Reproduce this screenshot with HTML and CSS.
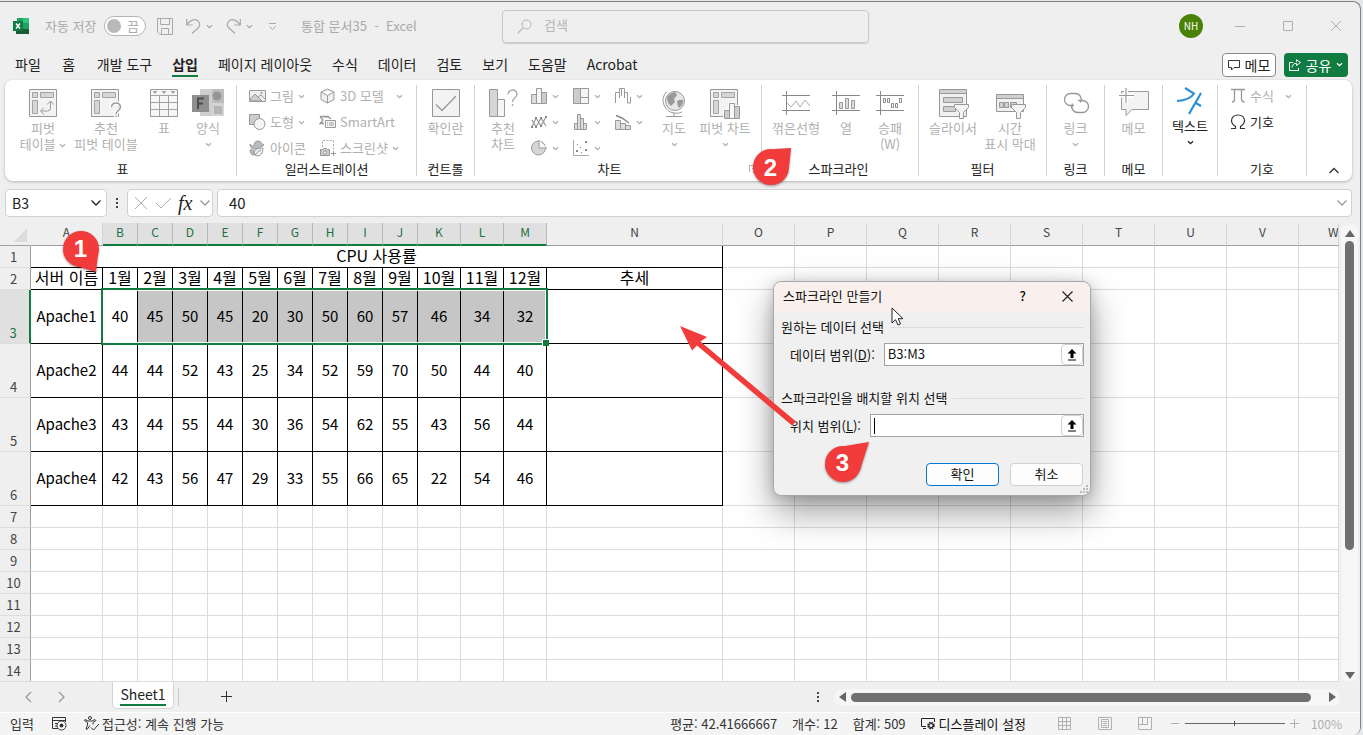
FILE: index.html
```html
<!DOCTYPE html>
<html lang="ko">
<head>
<meta charset="utf-8">
<title>통합 문서35 - Excel</title>
<link rel="stylesheet" href="styles.css">
</head>
<body>
<svg class="defs" aria-hidden="true">
  <symbol id="chev" viewBox="0 0 7 7"><path d="M1 2.2 3.5 4.7 6 2.2" fill="none" stroke="currentColor" stroke-width="1.3"/></symbol>
  <symbol id="chev-lg" viewBox="0 0 12 12"><path d="M1.5 3.5 6 8 10.500 3.500" fill="none" stroke="currentColor" stroke-width="1.3"/></symbol>
  <symbol id="pivot" viewBox="0 0 28 28"><path d="M.5.5h27v27H.5z" fill="#f3f3f3" stroke="#979797"/><path d="M3.500 3.500h5v5h-5zM11.500 3.500h13v5h-13zM3.500 11.500h5v13h-5z" fill="#d6d6d6" stroke="#a3a3a3"/></symbol>
  <symbol id="uparrow" viewBox="0 0 12 12"><path d="M6 0 10.500 4.500H7.500V9h-3V4.500h-3zM2 10.500h8v1H2z" fill="#000"/></symbol>
</svg>
<div class="window">
  <header class="titlebar">
    <div class="quick">
      <svg class="logo" width="17" height="16" viewBox="0 0 17 16"><path d="M4 0h12v16H4z" fill="#21a366"/><path d="M10 0h6v5h-6z" fill="#33c481"/><path d="M4 5h6v6H4z" fill="#107c41"/><path d="M10 5h6v6h-6z" fill="#21a366"/><path d="M3 11h13v5H3z" fill="#185c37"/><path d="M0 3h10v10H0z" fill="#107c41"/><path d="M3 5.500 7 10.500M7 5.500 3 10.500" stroke="#fff" stroke-width="1.500"/></svg>
      <span class="autosave">자동 저장</span>
      <button class="toggle" role="switch" aria-checked="false"><i></i>끔</button>
      <button class="qbtn save" aria-label="저장"><svg width="16" height="17" viewBox="0 0 16 17"><path d="M.5.5h15v16H3L.5 14zM3.500.5v6h9v-6M4.500 16.500v-6h7v6" fill="none" stroke="#a9a9a9"/></svg></button>
      <button class="qbtn" aria-label="실행 취소"><svg width="15" height="16" viewBox="0 0 15 16"><path d="M.7 1v6h6M1 6.700C4 2 8.500.5 11.500 2.500 14.500 5 14.500 8 11.500 10.500L6 15.500" fill="none" stroke="#a9a9a9" stroke-width="1.200"/></svg><svg class="chev"><use href="#chev"/></svg></button>
      <button class="qbtn" aria-label="다시 실행"><svg width="15" height="16" viewBox="0 0 15 16"><path d="M14.300 1v6h-6M14 6.700C11 2 6.500.5 3.500 2.500.5 5 .5 8 3.500 10.500L9 15.500" fill="none" stroke="#a9a9a9" stroke-width="1.200"/></svg><svg class="chev"><use href="#chev"/></svg></button>
      <button class="qbtn more" aria-label="빠른 실행 도구 모음 사용자 지정"><svg width="9" height="8" viewBox="0 0 9 8"><path d="M1 .5h7M1.500 3.500l3 3 3-3" fill="none" stroke="#a9a9a9"/></svg></button>
      <span class="doc">통합 문서35&nbsp; -&nbsp; Excel</span>
    </div>
    <label class="search"><svg width="15" height="15" viewBox="0 0 15 15"><circle cx="9.500" cy="5.500" r="4.500" fill="none" stroke="#b5b5b5"/><path d="M6.300 8.700.7 14.300" stroke="#b5b5b5" stroke-width="1.200"/></svg><input type="text" placeholder="검색" aria-label="검색"></label>
    <div class="winctl">
      <span class="avatar">NH</span>
      <button aria-label="최소화"><svg width="10" height="10"><path d="M0 5.500h10" stroke="#b0b0b0"/></svg></button>
      <button aria-label="최대화"><svg width="10" height="10"><path d="M.5.5h9v9h-9z" fill="none" stroke="#b0b0b0"/></svg></button>
      <button aria-label="닫기"><svg width="10" height="10"><path d="M0 0 10 10M10 0 0 10" stroke="#b0b0b0"/></svg></button>
    </div>
  </header>

  <nav class="tabs">
    <button>파일</button><button>홈</button><button>개발 도구</button><button class="on">삽입</button><button>페이지 레이아웃</button><button>수식</button><button>데이터</button><button>검토</button><button>보기</button><button>도움말</button><button>Acrobat</button>
    <div class="tabs-right">
      <button class="note"><svg width="12" height="12" viewBox="0 0 12 12"><path d="M.5 1.500h11v7H6L3.500 11V8.500h-3z" fill="none" stroke="#333"/></svg>메모</button>
      <button class="share"><svg width="12" height="12" viewBox="0 0 12 12"><path d="M4 3.500H.5v8h9V9M3 8.500c.5-3 2-4.200 4.500-4.200V6.500L11.500 3.500 7.500.7v2" fill="none" stroke="#fff"/></svg>공유<svg class="chev"><use href="#chev"/></svg></button>
    </div>
  </nav>

  <section class="ribbon">
    <div class="group g-table">
      <div class="items">
        <button class="big w56"><svg width="28" height="28"><use href="#pivot"/><path d="M12 22h6.500q3 0 3-3v-6M15 18.500 11.500 22l3.500 3.500M18 15.500l3.500-3.500 3.500 3.500" fill="none" stroke="#999"/></svg>피벗<br><span>테이블 <svg class="chev"><use href="#chev"/></svg></span></button>
        <button class="big w70"><svg width="30" height="28"><use href="#pivot" width="28" height="28"/><path d="M20 18q.5-4 5-4t4.500 4c0 4-4.500 4-4.500 7.500M25 27v1.500" fill="none" stroke="#fff" stroke-width="4"/><path d="M20.500 18q.5-4 4.500-4t4.500 4c0 3.500-4.500 4-4.500 7M25 26.500V28" fill="none" stroke="#999" stroke-width="1.500"/></svg>추천<br>피벗 테이블</button>
        <button class="big w46"><svg width="28" height="28"><path d="M.5.5h27v27H.5z" fill="#f6f6f6" stroke="#979797"/><path d="M1 6.500h26M1 13.500h26M1 20.500h26M9.500 6.500V27M18.500 6.500V27" stroke="#a3a3a3"/><path d="M2.500 2h5L5 5zM11.500 2h5L14 5zM20.500 2h5L23 5z" fill="#a3a3a3"/></svg>표</button>
        <button class="big w42"><svg width="32" height="28"><path d="M8 0h24v27H8z" fill="#cfcfcf"/><path d="M20 0h12v14H20z" fill="#bdbdbd"/><path d="M20 14h12v13H20z" fill="#d3d3d3"/><circle cx="25" cy="7" r="4.500" fill="#959595"/><path d="M22 17h8v8h-8z" fill="#b5b5b5"/><path d="M0 6h17v17H0z" fill="#8f8f8f"/><path d="M6 20V9.500h6M6 14.500h5" fill="none" stroke="#4c4c4c" stroke-width="2"/></svg>양식<svg class="chev below"><use href="#chev"/></svg></button>
      </div>
      <h2>표</h2>
    </div>
    <div class="group g-illus">
      <div class="items">
        <div class="stack c1">
          <button><svg width="17" height="16"><path d="M.5 2.500h16v11H.5z" fill="#eee" stroke="#999"/><path d="M1 11l5-5 7 7H1z" fill="#ccc" stroke="#999"/><path d="M9 9l3-2 4 4" fill="none" stroke="#999"/><circle cx="12.500" cy="5" r="1" fill="#999"/></svg>그림<svg class="chev"><use href="#chev"/></svg></button>
          <button><svg width="17" height="16"><path d="M.5.5h10v10H.5z" fill="#ccc" stroke="#999"/><circle cx="10.500" cy="10" r="5.500" fill="#f4f4f4" stroke="#999"/></svg>도형<svg class="chev"><use href="#chev"/></svg></button>
          <button><svg width="17" height="17"><path d="M5 6Q5 1 9 1q3 0 3.500 2.500L15 5q-2 1.500-3 1.500Q11 9 6 9 1 9 1 4q2 3 4 2zM1 10q3-1 4 1v4Q1 15 1 10z" fill="#bbb" stroke="#999"/><path d="M5 12q1-4 9-4 0 8-6 8-3 0-3-4zM6 15q3-4 6-5" fill="#eee" stroke="#999"/></svg>아이콘</button>
        </div>
        <div class="stack">
          <button><svg width="16" height="16"><path d="M7.500 1 14 4v7.500L7.500 15 1 11.500V4zM1 4l6.500 3.500L14 4M7.500 7.500V15" fill="#f1f1f1" stroke="#999"/></svg>3D 모델<svg class="chev far"><use href="#chev"/></svg></button>
          <button><svg width="16" height="16"><path d="M0 2.500h8L11 5M0 2.500 3 6 0 9.500h4" fill="#ccc" stroke="#999" stroke-width="1.300"/><path d="M5.500 6.500h10v7h-10z" fill="#f4f4f4" stroke="#999"/><path d="M7 9h1M9 9h5M7 11h1M9 11h5" stroke="#999"/></svg>SmartArt</button>
          <button><svg width="16" height="17"><path d="M2.500 7V.5h11V10" fill="none" stroke="#aaa" stroke-dasharray="2 1.500"/><path d="M.5 9.500h2l1-1h3l1 1h2v6h-9z" fill="#ccc" stroke="#999"/><circle cx="5" cy="12.500" r="1.700" fill="#eee" stroke="#999"/><path d="M11 13.500h5M13.500 11v5" stroke="#999"/></svg>스크린샷<svg class="chev"><use href="#chev"/></svg></button>
        </div>
      </div>
      <h2>일러스트레이션</h2>
    </div>
    <div class="group g-58">
      <div class="items center"><button class="big w56"><svg width="28" height="28"><path d="M.5.5h27v27H.5z" fill="#f3f3f3" stroke="#979797"/><path d="M4 15.500 10 21.500 24 7" fill="none" stroke="#999" stroke-width="1.300"/></svg>확인란</button></div>
      <h2>컨트롤</h2>
    </div>
    <div class="group g-chart">
      <div class="items">
        <button class="big w42"><svg width="28" height="28"><path d="M.5.500h8v27h-8z" fill="#d6d6d6" stroke="#999"/><path d="M8.500 10.500h7v17h-7z" fill="#f5f5f5" stroke="#999"/><path d="M19 5.500q.5-4.500 4.500-4.500T28 5c0 4-4.500 4-4.500 8M23.500 15v2" fill="none" stroke="#aaa" stroke-width="1.400"/></svg>추천<br>차트</button>
        <div class="icons">
          <button aria-label="세로 막대형"><svg width="16" height="16"><path d="M.5 6.500h5v9h-5z" fill="#ddd" stroke="#999"/><path d="M5.500.5h5v15h-5z" fill="#f5f5f5" stroke="#999"/><path d="M10.500 4.500h5v11h-5z" fill="#ccc" stroke="#999"/></svg><svg class="chev"><use href="#chev"/></svg></button>
          <button aria-label="계층 구조"><svg width="16" height="16"><path d="M.5.5h15v15H.5z" fill="#f5f5f5" stroke="#999"/><path d="M.5.500h7v15h-7z" fill="#ccc" stroke="#999"/><path d="M7.500 9.500h8" stroke="#999"/></svg><svg class="chev"><use href="#chev"/></svg></button>
          <button aria-label="폭포"><svg width="16" height="16"><path d="M.5 15V4.500h4V10M4.500 6V.5h5V10M6.500 1v7M9.500 4.500h3V15h3V9" fill="none" stroke="#999"/></svg><svg class="chev"><use href="#chev"/></svg></button>
          <button aria-label="꺾은선형"><svg width="16" height="16"><path d="M1 13 5 4l5 8 5-9M1 6l4 7 5-9 5 8" fill="none" stroke="#999" stroke-width="1.200"/><path d="M0 12h2v2H0zM4 3h2v2H4zM9 11h2v2H9zM14 2h2v2h-2zM4 12h2v2H4zM9 3h2v2H9z" fill="#888"/></svg><svg class="chev"><use href="#chev"/></svg></button>
          <button aria-label="통계"><svg width="16" height="16"><path d="M1.500 9.500h3v6h-3zM4.500.5h3v15h-3zM7.500 4.500h3v11h-3zM10.500 9.500h3v6h-3z" fill="#ddd" stroke="#999"/></svg><svg class="chev"><use href="#chev"/></svg></button>
          <button aria-label="콤보"><svg width="16" height="16"><path d="M.5 6.500h5v9h-5zM5.500 9.500h5v6h-5zM10.500 11.500h5v4h-5z" fill="#ddd" stroke="#999"/><path d="M1 1.500 7 4l7 5" fill="none" stroke="#888" stroke-width="1.500"/></svg><svg class="chev"><use href="#chev"/></svg></button>
          <button aria-label="원형"><svg width="16" height="16"><circle cx="7.500" cy="8" r="7" fill="#d6d6d6" stroke="#999"/><path d="M8 0v8h8" fill="#f8f8f8" stroke="#999"/></svg><svg class="chev"><use href="#chev"/></svg></button>
          <button aria-label="분산형"><svg width="16" height="16"><path d="M.5 0v15.500H16" fill="none" stroke="#aaa"/><path d="M3 10h2v2H3zM7 7h1v1H7zM12 1h2v2h-2zM4 4h1v1H4zM12 9h2v2h-2zM8 12h1v1H8z" fill="#888"/></svg><svg class="chev"><use href="#chev"/></svg></button>
        </div>
        <button class="big w34"><svg width="24" height="29"><circle cx="13" cy="12" r="9.500" fill="#e6e6e6" stroke="#999"/><path d="M5 8q3-4 8-5l2 3-3 4 1 3-4 4q-4-3-4-9zM15 12q3-2 6-1 1 4-4 8-2-3-2-7z" fill="#999"/><path d="M4.500 3Q-1 9 2 16t10 8q5 1 8-1M12 24v3M4 27.500h16" fill="none" stroke="#999"/></svg>지도<svg class="chev below"><use href="#chev"/></svg></button>
        <button class="big w68"><svg width="30" height="30"><use href="#pivot" width="28" height="28"/><path d="M13 20h5v-7h7v3h5v14H13z" fill="#fff"/><path d="M14.500 21.500h5v8h-5zM24.500 17.500h5v12h-5z" fill="#ccc" stroke="#999"/><path d="M19.500 14.500h5v15h-5z" fill="#f8f8f8" stroke="#999"/></svg>피벗 차트<svg class="chev below"><use href="#chev"/></svg></button>
      </div>
      <h2>차트</h2>
      <svg class="launcher" width="8" height="8"><path d="M.5 7V.5H7M3 3l4 4M7.500 4v3.500H4" fill="none" stroke="#aaa"/></svg>
    </div>
    <div class="group g-spark">
      <div class="items">
        <button class="big w58"><svg width="28" height="28"><path d="M0 6.500h28M0 21.500h28M4.500 2v24" stroke="#888"/><path d="M5 14l4 4 5-6 4 6 5-7 5 6" fill="none" stroke="#aaa"/></svg>꺾은선형</button>
        <button class="big w42"><svg width="28" height="28"><path d="M0 6.500h28M0 21.500h28M4.500 2v24" stroke="#888"/><path d="M7.500 13.500h3v6h-3zM13.500 9.500h3v10h-3zM19.500 11.500h3v8h-3z" fill="#ddd" stroke="#999"/></svg>열</button>
        <button class="big w46"><svg width="28" height="28"><path d="M0 6.500h28M0 21.500h28M4.500 2v24" stroke="#888"/><path d="M7.500 9.500h2v4h-2zM11.500 9.500h2v4h-2zM15.500 14.500h2v4h-2zM19.500 14.500h2v4h-2zM23.500 9.500h2v4h-2z" fill="none" stroke="#888"/></svg>승패<br>(W)</button>
      </div>
      <h2>스파크라인</h2>
    </div>
    <div class="group g-filter">
      <div class="items">
        <button class="big w60"><svg width="28" height="30"><path d="M.5.5h27v27H.5z" fill="#f1f1f1" stroke="#979797"/><path d="M1 1h26v3H1z" fill="#d0d0d0"/><path d="M.5 4.500h27" stroke="#999"/><path d="M4.500 8.500h19v5h-19zM4.500 17.500h12v5h-12z" fill="#d0d0d0" stroke="#999"/><path d="M15.500 15.500h14v3l-5 5v6h-4v-6l-5-5z" fill="#f4f4f4" stroke="#999"/></svg>슬라이서</button>
        <button class="big w54"><svg width="28" height="30"><path d="M.5 5.500h27v17H.5z" fill="#f1f1f1" stroke="#979797"/><path d="M1 6h26v3H1z" fill="#d0d0d0"/><path d="M.5 9.500h27" stroke="#999"/><path d="M3.500 13.500h4v5h-4zM8.500 13.500h4v5h-4zM14.500 13.500h6v5h-6z" fill="#d0d0d0" stroke="#999"/><path d="M15.500 15.500h14v3l-5 5v6h-4v-6l-5-5z" fill="#f4f4f4" stroke="#999"/></svg>시간<br>표시 막대</button>
      </div>
      <h2>필터</h2>
    </div>
    <div class="group g-58">
      <div class="items center"><button class="big w56"><svg width="28" height="28"><path d="M12 16.500H8.500a6 6 0 0 1 0-12h5a6 6 0 0 1 5 9M16 11.500h4.500a6 6 0 0 1 0 12h-5a6 6 0 0 1-5-9" fill="none" stroke="#999" stroke-width="1.300"/></svg>링크<svg class="chev below"><use href="#chev"/></svg></button></div>
      <h2>링크</h2>
    </div>
    <div class="group g-58">
      <div class="items center"><button class="big w56"><svg width="32" height="28"><path d="M3.500 2.500h27v18H14l-6 6v-6H3.500z" fill="#f3f3f3" stroke="#999"/><path d="M8 -1v15M1 6.500h15" stroke="#fff" stroke-width="4"/><path d="M8 -1v15M1 6.500h15" stroke="#999" stroke-width="1.200"/></svg>메모</button></div>
      <h2>메모</h2>
    </div>
    <div class="group g-text">
      <div class="items center"><button class="big dark w54"><svg width="28" height="28"><path d="M9 1l9 5.500Q14 13 1 14" fill="none" stroke="#2b8fd3" stroke-width="2.200"/><path d="M25 6 13 27M19 15.500l6 3.500" fill="none" stroke="#2b8fd3" stroke-width="2.200"/></svg>텍스트<svg class="chev below"><use href="#chev"/></svg></button></div>
    </div>
    <div class="group g-sym">
      <div class="items"><div class="stack">
        <button><svg width="16" height="16"><path d="M1 1.500h14M4.500 2v10q0 2-2.500 2M11.500 2v9q0 3 3 3" fill="none" stroke="#999" stroke-width="1.300"/></svg>수식<svg class="chev sym"><use href="#chev"/></svg></button>
        <button class="dark"><svg width="16" height="16"><path d="M1 14.500h4.500v-2Q1.500 10 1.500 6.500 2 1 8 1t6.500 5.500q0 3.500-4 6v2H15" fill="none" stroke="#333" stroke-width="1.200"/></svg>기호</button>
      </div></div>
      <h2>기호</h2>
    </div>
    <button class="collapse" aria-label="리본 메뉴 축소"><svg width="12" height="12"><path d="M1.500 8 6 3.500 10.500 8" fill="none" stroke="#333" stroke-width="1.300"/></svg></button>
  </section>

  <section class="formula">
    <div class="box name"><input type="text" value="B3" aria-label="이름 상자"><button aria-label="이름 목록"><svg width="12" height="12"><use href="#chev-lg"/></svg></button></div>
    <span class="dots"><i></i><i></i><i></i></span>
    <div class="box fx">
      <button aria-label="취소"><svg width="14" height="14"><path d="M1 1l12 12M13 1 1 13" stroke="#aaa"/></svg></button>
      <button aria-label="입력"><svg width="17" height="14"><path d="M1 7l5 5L16 2" fill="none" stroke="#aaa"/></svg></button>
      <button class="f" aria-label="함수 삽입">fx</button>
      <button class="grey" aria-label="함수 목록"><svg width="12" height="12"><use href="#chev-lg"/></svg></button>
    </div>
    <div class="box entry"><input type="text" value="40" aria-label="수식 입력줄"><button class="grey" aria-label="수식 입력줄 확장"><svg width="12" height="12"><use href="#chev-lg"/></svg></button></div>
  </section>

  <main class="sheet">
    <div class="cells">
      <table class="grid">
        <colgroup id="cols"></colgroup>
        <thead id="head"></thead>
        <tbody id="body"></tbody>
      </table>
      <div class="selection"></div>
    </div>
    <div class="vscroll"><i class="up"></i><i class="thumb"></i><i class="down"></i></div>
  </main>

  <footer class="sheets">
    <button class="nav" aria-label="이전 시트"><svg width="8" height="10"><path d="M7 0 2 5l5 5" fill="none" stroke="#999" stroke-width="1.300"/></svg></button>
    <button class="nav" aria-label="다음 시트"><svg width="8" height="10"><path d="M2 0l5 5-5 5" fill="none" stroke="#999" stroke-width="1.300"/></svg></button>
    <button class="sheet-tab"><span>Sheet1</span></button>
    <i class="sep"></i>
    <button class="add" aria-label="새 시트"><svg width="12" height="12"><path d="M0 5.500h11M5.500 0v11" stroke="#333"/></svg></button>
    <span class="dots"><i></i><i></i><i></i></span>
    <div class="hscroll"><i class="left"></i><i class="thumb"></i><i class="right"></i></div>
  </footer>

  <footer class="status">
    <span class="mode">입력</span>
    <svg width="15" height="14" class="rec"><path d="M13.500 5V.5H.5v11H6M.5 3.500h13M3 6.500h3M3 9h2" fill="none" stroke="#333"/><circle cx="9.500" cy="8.500" r="4.500" fill="#fff" stroke="#333"/><circle cx="9.500" cy="8.500" r="2" fill="#333"/></svg>
    <svg width="16" height="15" class="acc"><circle cx="6" cy="2" r="1.500" fill="none" stroke="#333"/><path d="M1 3.500l3 1.500h4l3-1.500 1 1-3 2v2M1 3.500l-.5 1 3 2V9L2 13l1 .5L6 9.500M7 11.500l2.500 2.500L15 8" fill="none" stroke="#333"/></svg>
    <span>접근성: 계속 진행 가능</span>
    <span class="stat first">평균: 42.41666667</span><span class="stat">개수: 12</span><span class="stat">합계: 509</span>
    <button class="display"><svg width="15" height="13"><path d="M5 9.500H.5v-8h13V5M2 11.500h3" fill="none" stroke="#222"/><circle cx="10" cy="8.500" r="2.800" fill="none" stroke="#222" stroke-width="2" stroke-dasharray="1.500 .7"/><circle cx="10" cy="8.500" r="2" fill="none" stroke="#222"/></svg>디스플레이 설정</button>
    <button class="view" aria-label="기본"><svg width="14" height="14"><path d="M.5.5h12v12H.5zM4.500 0v13M8.500 0v13M0 4.500h13M0 8.500h13" fill="none" stroke="#b0b0b0"/></svg></button>
    <button class="view" aria-label="페이지 레이아웃"><svg width="14" height="14"><path d="M.5.5h13v12H.5zM3.500 2.500h7v8h-7zM5 4.500h4M5 6.500h4M5 8.500h4" fill="none" stroke="#b0b0b0"/></svg></button>
    <button class="view" aria-label="페이지 나누기"><svg width="14" height="14"><path d="M.5.5h13v12H.5zM4.500 0v7.500M9.500 0v7.500M0 7.500h10" fill="none" stroke="#b0b0b0"/></svg></button>
    <button class="zoom" aria-label="축소"><svg width="9" height="9"><path d="M0 4.500h8" stroke="#b0b0b0"/></svg></button>
    <input class="slider" type="range" aria-label="확대/축소" min="0" max="100" value="50">
    <button class="zoom" aria-label="확대"><svg width="9" height="9"><path d="M0 4.500h9M4.500 0v9" stroke="#b0b0b0"/></svg></button>
    <span class="pct">100%</span>
  </footer>

  <div class="dialog" role="dialog" aria-label="스파크라인 만들기">
    <div class="dlg-title">스파크라인 만들기<button aria-label="도움말" class="help">?</button><button aria-label="닫기"><svg width="11" height="11"><path d="M.5.5l10 10M10.500.5l-10 10" stroke="#222" stroke-width="1.200"/></svg></button></div>
    <div class="dlg-body">
      <div class="legend"><span>원하는 데이터 선택</span></div>
      <div class="field"><label for="range">데이터 범위(<u>D</u>):</label><div class="ref"><input id="range" type="text" value="B3:M3"><button aria-label="데이터 범위 선택"><svg width="12" height="12"><use href="#uparrow"/></svg></button></div></div>
      <div class="legend second"><span>스파크라인을 배치할 위치 선택</span></div>
      <div class="field"><label for="loc">위치 범위(<u>L</u>):</label><div class="ref caret"><input id="loc" type="text" value=""><button aria-label="위치 범위 선택"><svg width="12" height="12"><use href="#uparrow"/></svg></button></div></div>
      <div class="actions"><button class="ok">확인</button><button>취소</button></div>
    </div>
    <svg class="grip" width="9" height="9"><path d="M6 0h2v2H6zM3 3h2v2H3zM6 3h2v2H6zM0 6h2v2H0zM3 6h2v2H3zM6 6h2v2H6z" fill="#bbb"/></svg>
  </div>
  <svg class="pointer" width="13" height="20"><path d="M1 1v15l3.500-3.300L7 18l2.500-1.100-2.300-5.200H12z" fill="#fff" stroke="#222"/></svg>
  <svg class="arrow" width="120" height="102"><path d="M0 0 27 11 20.500 15.500 116 95.500 112 99.500 17 19.500 12 24.500z" fill="#f23b3b"/></svg>
  <div class="badge b1"><svg width="38" height="44"><circle cx="19" cy="19" r="18"/><path d="M14 36 34 42 36 24z"/></svg><b>1</b></div>
  <div class="badge b2"><svg width="40" height="40"><circle cx="19" cy="20" r="18"/><path d="M22 2 39 1 37 20z"/></svg><b>2</b></div>
  <div class="badge b3"><svg width="46" height="42"><circle cx="19" cy="22" r="18"/><path d="M21 4 45 0 36 28z"/></svg><b>3</b></div>
</div>
<script src="grid.js"></script>
</body>
</html>
```
FILE: styles.css
```css
* { box-sizing: border-box; }
body {
  margin: 0;
  height: 100vh;
  overflow: hidden;
  background: #e6e8ea;
  color: #222;
  font: 13px/16px "Noto Sans CJK KR", "Noto Sans", sans-serif;
}
button, input { font: inherit; color: inherit; border: 0; background: none; padding: 0; margin: 0; }
input { outline: 0; min-width: 0; }
svg { flex: none; overflow: visible; }
.defs { position: absolute; width: 0; height: 0; }
.chev { width: 7px; height: 7px; }

.window {
  position: relative;
  display: flex;
  flex-direction: column;
  height: calc(100vh - 1px);
  margin: 1px 2px 0 0;
  border-top: 1px solid #808080;
  border-right: 1px solid #808080;
  border-radius: 0 8px 8px 0;
  background: #efefef;
  overflow: hidden;
}

/* title bar */
.titlebar { display: grid; grid-template-columns: 502px 27% 1fr; align-items: center; height: 48px; color: #aaa; }
.quick { display: flex; align-items: center; padding-left: 13px; }
.autosave { margin-left: 15px; width: 52px; padding-bottom: 1px; white-space: nowrap; }
.toggle { display: flex; align-items: center; justify-content: space-between; margin-left: 7px; width: 42px; height: 20px; padding: 0 6px 0 2px; border: 1px solid #b5b5b5; border-radius: 10px; background: #fff; line-height: 16px; }
.toggle i { width: 14px; height: 14px; border-radius: 7px; background: #b9b9b9; }
.qbtn { display: flex; align-items: center; gap: 5px; margin-left: 13px; height: 20px; }
.qbtn.save { margin-left: 11px; }
.qbtn.more { margin: 2px 0 0 15px; }
.doc { margin-left: 24px; white-space: nowrap; }
.search { display: flex; align-items: center; height: 33px; padding-left: 14px; gap: 12px; border: 1px solid #c9c9c9; border-radius: 4px; box-shadow: 0 1px 1px #ccc; }
.search input { flex: 1; padding-bottom: 3px; }
.search input::placeholder { color: #b5b5b5; }
.winctl { display: flex; align-items: center; justify-content: flex-end; padding-right: 19px; gap: 38px; }
.winctl button { display: flex; }
.avatar { width: 24px; height: 24px; margin-right: -6px; border-radius: 12px; background: #498205; color: #fff; font-size: 10px; line-height: 24px; text-align: center; }

/* ribbon tabs */
.tabs { display: flex; align-items: center; height: 30px; padding-left: 5px; font-size: 14px; line-height: 20px; }
.tabs > button { min-width: 36px; padding: 0 10px 2px; white-space: nowrap; }
.tabs .on { position: relative; font-weight: 700; }
.tabs .on::after { content: ""; position: absolute; left: 10px; right: 10px; bottom: -1px; height: 2px; background: #107c41; }
.tabs-right { display: flex; gap: 8px; margin-left: auto; padding-right: 12px; }
.tabs-right button { display: flex; align-items: center; justify-content: center; gap: 5px; height: 24px; padding-bottom: 1px; border-radius: 4px; }
.note { width: 54px; border: 1px solid #8a8a8a; background: #fff; }
.share { width: 64px; background: #107c41; color: #fff; }

/* ribbon */
.ribbon { display: flex; flex: none; height: 101px; margin: 0 8px 0 5px; border-radius: 8px; background: #fff; box-shadow: 0 1px 3px rgba(0, 0, 0, .25); color: #b0b0b0; }
.group { position: relative; display: flex; flex: none; flex-direction: column; justify-content: space-between; height: 91px; margin-top: 5px; border-right: 1px solid #d0d0d0; }
.group h2 { margin: 0; font-size: 13px; font-weight: 400; line-height: 14px; color: #222; text-align: center; }
.items { display: flex; align-items: flex-start; }
.center { justify-content: center; }
.g-table { width: 232px; padding-left: 10px; }
.g-table h2 { margin-right: 6px; }
.g-illus { width: 180px; padding-left: 12px; }
.g-illus h2 { margin-right: 12px; }
.g-58 { width: 58px; }
.g-chart { width: 287px; padding-left: 7px; }
.g-chart h2 { margin-right: 24px; }
.g-spark { width: 157px; padding-left: 5px; }
.g-spark h2 { margin-right: 8px; }
.g-filter { width: 128px; padding-left: 4px; }
.g-filter h2 { margin-right: 4px; }
.g-text { width: 55px; }
.g-sym { width: 89px; padding-left: 12px; }
.g-sym h2 { margin-right: 12px; }
.big { display: block; padding-top: 4px; line-height: 16px; white-space: nowrap; text-align: center; }
.big > svg:first-child { display: block; margin: 0 auto 3px; height: 28px; }
.big .below { display: block; margin: 5px auto 0; }
.w34 { width: 34px; } .w42 { width: 42px; } .w46 { width: 46px; } .w54 { width: 54px; } .w56 { width: 56px; }
.w58 { width: 58px; } .w60 { width: 60px; } .w68 { width: 68px; } .w70 { width: 70px; }
.dark { color: #222; }
.big.dark { padding-top: 2px; }
.stack { display: flex; flex-direction: column; gap: 4px; }
.stack button { display: flex; align-items: center; gap: 4px; height: 22px; white-space: nowrap; }
.c1 { width: 71px; }
.far { margin-left: 8px; }
.sym { margin-left: 7px; }
.icons { display: grid; grid-template-columns: repeat(3, 42px); gap: 4px 0; margin-left: 7px; }
.icons button { display: flex; align-items: center; gap: 5px; height: 22px; }
.launcher { position: absolute; right: 4px; bottom: 3px; }
.collapse { margin: auto 12px 4px auto; height: 12px; }
.collapse svg { display: block; }

/* formula bar */
.formula { display: flex; flex: none; align-items: center; margin: 8px 8px 6px 5px; font-size: 14px; }
.box { display: flex; align-items: center; height: 28px; border: 1px solid #d0d0d0; border-radius: 4px; background: #fff; }
.box button { display: flex; }
.name { width: 102px; padding: 0 4px 0 6px; }
.name input, .entry input { flex: 1; height: 24px; padding-bottom: 1px; }
.dots { display: flex; flex-direction: column; gap: 2px; width: 20px; align-items: center; }
.dots i { width: 2px; height: 2px; background: #444; }
.fx { width: 86px; justify-content: space-between; padding: 0 1px 0 6px; }
.fx .f { font: italic 400 20px/20px "Liberation Serif", serif; color: #222; }
.grey { color: #999; }
.entry { flex: 1; margin-left: 4px; padding: 0 3px 0 11px; font-size: 15px; }

/* cell grid */
.sheet { display: flex; flex: 1; min-height: 0; overflow: hidden; }
.cells { position: relative; flex: 1; min-width: 0; overflow: hidden; border-bottom: 1px solid #dcdcdc; }
.grid { width: 100%; table-layout: fixed; border-collapse: separate; border-spacing: 0; font-size: 15px; line-height: 18px; background: #fff; }
.grid th, .grid td { padding: 0 0 2px; border-right: 1px solid #dcdcdc; border-bottom: 1px solid #dcdcdc; font-weight: 400; text-align: center; white-space: nowrap; overflow: hidden; height: 22px; }
.grid td { color: #000; }
.grid tr.tall > * { height: 54px; }
.grid thead th { height: 23px; padding-bottom: 4px; border-bottom-color: #a0a0a0; border-right-color: #d4d4d4; background: #efefef; color: #444; font-size: 12px; line-height: 16px; }
.grid thead th.picked { padding-bottom: 3px; background: #e0e0e0; color: #1e7145; border-bottom: 2px solid #107c41; border-right-color: #b8b8b8; }
.grid thead th:last-child { padding-left: 29px; text-align: left; }
.grid thead th:first-child { border-right-color: #efefef; background: linear-gradient(to bottom right, #efefef 50%, #dcdcdc 50%) 13px 5px / 14px 14px no-repeat #efefef; }
.grid tbody th { padding: 0 3px 1px 0; border-right-color: #a0a0a0; background: #efefef; color: #444; font-size: 13px; line-height: 18px; vertical-align: bottom; }
.grid tbody th.picked { background: #e0e0e0; color: #1e7145; border-right: 2px solid #107c41; }
.grid td.data { border-color: #000; }
.grid td.label { padding-bottom: 3px; font-size: 16px; }
.grid td.sel { background: #c6c6c6; }
.selection { position: absolute; left: 101px; top: 65px; width: 447px; height: 57px; border: 2px solid #107c41; }
.selection::before { content: ""; position: absolute; inset: 0; border: 1px solid #fff; }
.selection::after { content: ""; position: absolute; right: -3px; bottom: -3px; width: 6px; height: 6px; border: solid #fff; border-width: 1px 0 0 1px; background: #107c41; }
.vscroll { display: flex; flex-direction: column; align-items: center; width: 17px; margin: 1px 2px 0; padding: 6px 0 3px; border-radius: 8px; background: #f6f6f6; }
.vscroll .thumb { width: 9px; flex: 0 1 309px; margin: 4px 0 auto; border-radius: 5px; background: #707070; }
.up, .down { border: solid transparent; border-width: 0 5px 7px; border-bottom-color: #666; }
.down { border-width: 7px 5px 0; border-top-color: #666; }

/* sheet tabs */
.sheets { display: flex; flex: none; align-items: center; height: 30px; padding-left: 24px; }
.nav { display: flex; width: 8px; margin-right: 25px; }
.sheet-tab { align-self: flex-start; width: 62px; height: 27px; margin-left: 22px; border: 1px solid #d4d4d4; border-top: 0; border-radius: 0 0 5px 5px; background: #fff; font-size: 14px; line-height: 20px; }
.sheet-tab span { display: inline-block; border-bottom: 2px solid #107c41; }
.sep { width: 1px; height: 18px; margin: 0 42px 0 4px; background: #c8c8c8; }
.add { display: flex; }
.sheets .dots { margin-left: auto; }
.hscroll { display: flex; align-items: center; flex: 0 0 506px; height: 17px; margin: 0 20px 0 6px; padding: 0 4px 0 5px; border-radius: 8px; background: #f6f6f6; }
.hscroll .thumb { flex: 1; height: 9px; margin: 0 18px 0 5px; border-radius: 5px; background: #707070; }
.left, .right { border: solid transparent; border-width: 5px 7px 5px 0; border-right-color: #666; }
.right { border-width: 5px 0 5px 7px; border-left-color: #666; }

/* status bar */
.status { display: flex; flex: none; align-items: center; height: 23px; padding: 0 18px 1px 10px; border-top: 1px solid #fff; background: #f4f4f4; color: #333; white-space: nowrap; }
.rec { margin: 0 17px 0 18px; }
.acc { margin-right: 2px; }
.stat { margin-right: 15px; }
.first { margin-left: auto; }
.display { display: flex; align-items: center; gap: 3px; margin-right: 32px; color: #111; }
.view { display: flex; margin-right: 26px; }
.zoom { display: flex; width: 9px; }
.view + .zoom { margin-left: -7px; }
.slider { width: 100px; height: 12px; margin: 0 5px; appearance: none; background: linear-gradient(#666, #666) center / 100% 1px no-repeat; }
.slider::-webkit-slider-thumb { appearance: none; width: 1px; height: 5px; background: #555; }
.pct { margin-left: 12px; color: #b0b0b0; font-size: 12px; }

/* dialog */
.dialog { position: absolute; left: 773px; top: 279px; width: 318px; border: 1px solid #a8a8a8; border-radius: 8px; background: #f0f0f0; box-shadow: 0 16px 36px rgba(0, 0, 0, .38), 0 2px 14px rgba(0, 0, 0, .18); color: #111; }
.dlg-title { display: flex; align-items: center; height: 30px; padding: 0 17px 2px 9px; border-radius: 8px 8px 0 0; background: #f9f0ee; }
.dlg-title button { display: flex; }
.dlg-title .help { margin: 0 36px 0 auto; font-weight: 500; }
.dlg-body { padding: 7px 6px 9px 7px; }
.legend { display: flex; align-items: center; gap: 6px; white-space: nowrap; }
.legend::after { content: ""; flex: 1; height: 1px; background: #dcdcdc; }
.legend.second { margin-top: 24px; }
.field { display: flex; align-items: center; gap: 9px; margin-top: 8px; padding-left: 9px; white-space: nowrap; }
.ref { display: flex; align-items: center; flex: 1; height: 23px; border: 1px solid #a0a3a8; background: #fff; }
.ref input { flex: 1; padding: 0 0 1px 3px; }
.caret::before { content: ""; width: 1px; height: 16px; margin-left: 3px; background: #000; }
.ref button { display: flex; align-items: center; justify-content: center; width: 22px; height: 21px; border: 1px solid #d0d0d0; border-radius: 4px; background: #fdfdfd; }
.actions { display: flex; justify-content: flex-end; gap: 11px; margin-top: 26px; padding-right: 1px; }
.actions button { width: 73px; height: 23px; padding-bottom: 2px; border: 1px solid #d0d0d0; border-radius: 4px; background: #fdfdfd; }
.actions .ok { border-color: #0078d4; }
.grip { position: absolute; right: 1px; bottom: 1px; }

/* callouts */
.pointer { position: absolute; left: 891px; top: 305px; }
.arrow { position: absolute; left: 680px; top: 324px; }
.badge { position: absolute; }
.badge svg { display: block; fill: #f23b3b; filter: drop-shadow(0 1px 1px rgba(0, 0, 0, .4)); }
.badge b { position: absolute; left: 0; top: 7px; width: 37px; color: #fff; font: 700 24px/24px "Liberation Sans", sans-serif; text-align: center; }
.b1 { left: 62px; top: 228px; }
.b2 { left: 752px; top: 145px; }
.b3 { left: 824px; top: 440px; }
.b3 b, .b2 b { top: 9px; }
```
FILE: grid.js
```js
const widths = [31, 72, 35, 35, 35, 35, 35, 35, 35, 35, 35, 43, 43, 43, 176, 72, 72, 72, 72, 72, 72, 72, 72];
const letters = [..."ABCDEFGHIJKLMNOPQRSTUVW"];
const months = Array.from({ length: 12 }, (_, i) => `${i + 1}월`);
const servers = [
  ["Apache1", 40, 45, 50, 45, 20, 30, 50, 60, 57, 46, 34, 32],
  ["Apache2", 44, 44, 52, 43, 25, 34, 52, 59, 70, 50, 44, 40],
  ["Apache3", 43, 44, 55, 44, 30, 36, 54, 62, 55, 43, 56, 44],
  ["Apache4", 42, 43, 56, 47, 29, 33, 55, 66, 65, 22, 54, 46],
];
const add = (parent, tag, cls, text) => {
  const el = document.createElement(tag);
  if (cls) el.className = cls;
  if (text !== undefined) el.textContent = text;
  parent.appendChild(el);
  return el;
};

const cols = document.getElementById("cols");
widths.forEach(w => { add(cols, "col").style.width = w + "px"; });
add(cols, "col");

const head = add(document.getElementById("head"), "tr");
add(head, "th");
letters.forEach((l, i) => add(head, "th", i >= 1 && i <= 12 ? "picked" : "", l));

const body = document.getElementById("body");
for (let r = 1; r <= 14; r++) {
  const row = add(body, "tr", r >= 3 && r <= 6 ? "tall" : "");
  add(row, "th", r === 3 ? "picked" : "", r);
  let filled = 0;
  if (r === 1) {
    add(row, "td", "data label", "CPU 사용률").colSpan = 14;
    filled = 14;
  } else if (r === 2) {
    ["서버 이름", ...months, "추세"].forEach(t => add(row, "td", "data label", t));
    filled = 14;
  } else if (r <= 6) {
    servers[r - 3].forEach((t, i) => add(row, "td", r === 3 && i > 1 ? "data sel" : "data", t));
    add(row, "td", "data");
    filled = 14;
  }
  for (let c = filled; c < letters.length; c++) add(row, "td");
}
```
